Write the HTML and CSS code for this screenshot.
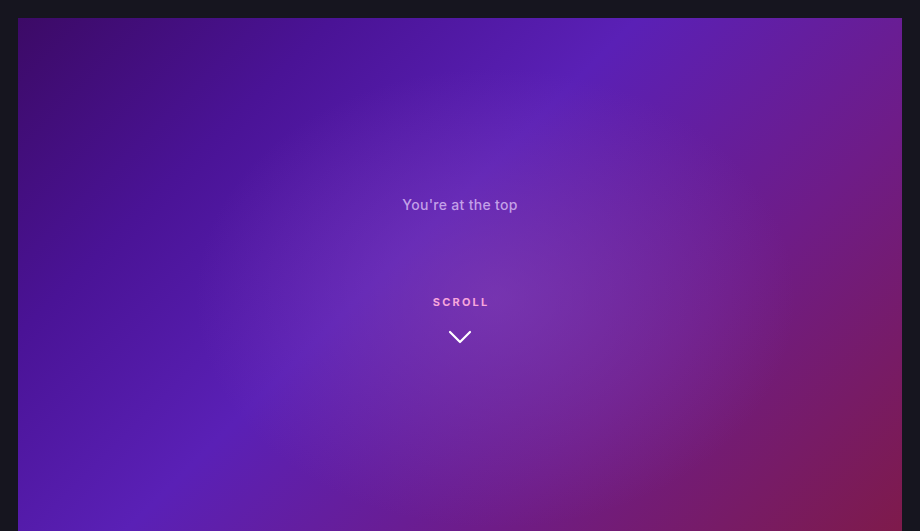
FILE: index.html
```html
<!DOCTYPE html>
<html lang="en">
<head>
<meta charset="utf-8">
<title>Top</title>
<link rel="stylesheet" href="styles.css">
</head>
<body>
<main class="panel">
  <div class="hero">
    <p class="status">You're at the top</p>
    <div class="scroll">
      <span class="scroll-label">SCROLL</span>
      <svg class="chevron" width="24" height="14" viewBox="0 0 24 14" aria-hidden="true">
        <polyline points="2,2 12,12 22,2" fill="none" stroke="#ffffff" stroke-width="2.2" stroke-linecap="round" stroke-linejoin="round"/>
      </svg>
    </div>
  </div>
</main>
</body>
</html>
```
FILE: styles.css
```css
html, body {
  margin: 0;
  padding: 0;
}
body {
  background: #16151f;
  padding: 18px 18px 0 18px;
  font-family: Inter, "Noto Sans", "Liberation Sans", sans-serif;
  overflow: hidden;
}
.panel {
  height: 560px;
  background:
    radial-gradient(ellipse 300px 230px at 54% 50%, rgba(135, 70, 185, 0.55), rgba(135, 70, 185, 0) 100%),
    linear-gradient(135deg, #3c0a66 0%, #4a1396 22%, #5a20b6 43%, #6e1c88 68%, #801a44 100%);
  display: flex;
  flex-direction: column;
  align-items: center;
}
.hero {
  display: flex;
  flex-direction: column;
  align-items: center;
  padding-top: 178px;
}
.status {
  margin: 0;
  font-size: 14px;
  font-weight: 500;
  letter-spacing: 0.3px;
  color: rgba(225, 200, 250, 0.75);
  line-height: 18px;
}
.scroll {
  margin-top: 81px;
  display: flex;
  flex-direction: column;
  align-items: center;
}
.scroll-label {
  font-size: 11px;
  font-weight: 700;
  letter-spacing: 2.2px;
  padding-left: 2.2px;
  color: #f7a6dc;
  line-height: 14px;
}
.chevron {
  margin-top: 21px;
  display: block;
}
```
